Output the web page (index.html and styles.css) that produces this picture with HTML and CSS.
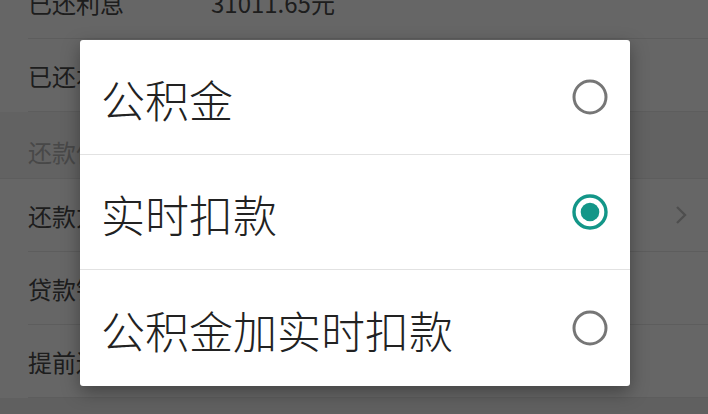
FILE: index.html
```html
<!DOCTYPE html>
<html lang="zh-CN">
<head>
<meta charset="utf-8">
<title>还款方式</title>
<link rel="stylesheet" href="styles.css">
</head>
<body>
<div class="screen">
  <div class="list">
    <div class="row"><span class="label">已还利息</span><span class="value">31011.65元</span></div>
    <div class="row"><span class="label">已还本金</span></div>
    <div class="section">还款信息</div>
    <div class="row"><span class="label">还款方式</span><span class="chev">
      <svg width="14" height="22" viewBox="0 0 14 22"><path d="M3 3 L11 11 L3 19" fill="none" stroke="#c4c4c4" stroke-width="2.4"/></svg></span></div>
    <div class="row"><span class="label">贷款银行</span></div>
    <div class="row"><span class="label">提前还款</span></div>
    <div class="tail"></div>
  </div>
  <div class="scrim"></div>
  <div class="dialog">
    <div class="option"><span class="opt-text">公积金</span>
      <svg class="radio" width="38" height="38" viewBox="0 0 38 38"><circle cx="19" cy="19" r="16" fill="none" stroke="#767676" stroke-width="3"/></svg></div>
    <div class="option"><span class="opt-text">实时扣款</span>
      <svg class="radio" width="38" height="38" viewBox="0 0 38 38"><circle cx="19" cy="19" r="16" fill="none" stroke="#139688" stroke-width="3.4"/><circle cx="19" cy="19" r="9.3" fill="#139688"/></svg></div>
    <div class="option"><span class="opt-text">公积金加实时扣款</span>
      <svg class="radio" width="38" height="38" viewBox="0 0 38 38"><circle cx="19" cy="19" r="16" fill="none" stroke="#767676" stroke-width="3"/></svg></div>
  </div>
</div>
</body>
</html>
```

FILE: styles.css
```css
html, body {
  margin: 0;
  padding: 0;
}
body {
  width: 708px;
  height: 414px;
  overflow: hidden;
  font-family: "Noto Sans CJK SC", "Noto Sans", sans-serif;
}
.screen {
  position: relative;
  width: 708px;
  height: 414px;
  overflow: hidden;
  background: #fff;
}
.list {
  display: flex;
  flex-direction: column;
  margin-top: -34px;
  background: #fff;
}
.row {
  height: 72px;
  display: flex;
  align-items: center;
  margin-left: 28px;
  border-bottom: 1px solid #e8e8e8;
  font-size: 24px;
  color: #4a4a4a;
}
.label {
  width: 183px;
  flex: none;
}
.value {
  flex: 1;
}
.chev {
  display: flex;
  margin-left: auto;
  margin-right: 20px;
}
.section {
  height: 67px;
  box-sizing: border-box;
  padding: 22px 0 0 28px;
  background: #f4f4f4;
  border-bottom: 1px solid #e8e8e8;
  font-size: 24px;
  color: #b4b4b4;
}
.tail {
  height: 40px;
  background: #f0f0f0;
}
.scrim {
  position: absolute;
  inset: 0;
  background: rgba(0, 0, 0, 0.6);
}
.dialog {
  position: absolute;
  left: 80px;
  top: 40px;
  width: 550px;
  background: #fff;
  border-radius: 3px;
  box-shadow: 0 6px 18px rgba(0, 0, 0, 0.35);
  display: flex;
  flex-direction: column;
}
.option {
  height: 114px;
  display: flex;
  align-items: center;
  justify-content: space-between;
  padding: 0 21px 0 21px;
  border-bottom: 1.5px solid #e2e2e2;
}
.option:last-child {
  border-bottom: none;
  height: 116px;
}
.opt-text {
  font-size: 44px;
  font-weight: 300;
  color: #222;
  line-height: 1;
  padding-top: 3px;
}
.radio {
  display: block;
}
```
